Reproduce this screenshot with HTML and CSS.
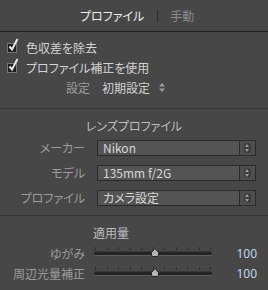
FILE: index.html
```html
<!DOCTYPE html>
<html lang="ja">
<head>
    <meta charset="UTF-8">
    <title>レンズ補正</title>
    <link rel="stylesheet" href="styles.css">
</head>
<body>
    <div class="panel">
        <div class="tabs">
            <span class="tab active">プロファイル</span>
            <span class="tab-sep"></span>
            <span class="tab">手動</span>
        </div>

        <div class="section options">
            <label class="check-row">
                <span class="checkbox">
                    <svg width="12" height="14" viewBox="0 0 12 14"><path d="M2.5 8.5 L5 11.5 L10.5 1" fill="none" stroke="#e6e6e6" stroke-width="2"/></svg>
                </span>
                色収差を除去
            </label>
            <label class="check-row">
                <span class="checkbox">
                    <svg width="12" height="14" viewBox="0 0 12 14"><path d="M2.5 8.5 L5 11.5 L10.5 1" fill="none" stroke="#e6e6e6" stroke-width="2"/></svg>
                </span>
                プロファイル補正を使用
            </label>
            <div class="setup-row">
                <span class="setup-label">設定</span>
                <span class="setup-value">初期設定</span>
                <svg class="mini-arrows" width="6" height="9" viewBox="0 0 6 9"><path d="M0 3.5 L3 0 L6 3.5 Z M0 5.5 L3 9 L6 5.5 Z" fill="#9a9a9a"/></svg>
            </div>
        </div>

        <div class="section lens">
            <div class="section-title">レンズプロファイル</div>
            <div class="form-grid">
                <span class="form-label">メーカー</span>
                <div class="select"><span class="select-text">Nikon</span><span class="select-btn"><i></i></span></div>
                <span class="form-label">モデル</span>
                <div class="select"><span class="select-text">135mm f/2G</span><span class="select-btn"><i></i></span></div>
                <span class="form-label">プロファイル</span>
                <div class="select"><span class="select-text">カメラ設定</span><span class="select-btn"><i></i></span></div>
            </div>
        </div>

        <div class="section amount">
            <div class="section-title amount-title">適用量</div>
            <div class="slider-row">
                <span class="form-label">ゆがみ</span>
                <div class="slider">
                    <div class="ticks"><i></i><i></i><i></i><i></i><i></i><i></i><i></i><i></i><i></i><i></i><i></i></div>
                    <div class="track"></div>
                    <svg class="thumb" width="10" height="9" viewBox="0 0 10 9"><path d="M5 0.5 L8.5 4.5 L8.5 7 Q8.5 8.5 7 8.5 L3 8.5 Q1.5 8.5 1.5 7 L1.5 4.5 Z" fill="#b4b4b4" stroke="#262626" stroke-width="1"/></svg>
                </div>
                <span class="slider-value">100</span>
            </div>
            <div class="slider-row">
                <span class="form-label">周辺光量補正</span>
                <div class="slider">
                    <div class="ticks"><i></i><i></i><i></i><i></i><i></i><i></i><i></i><i></i><i></i><i></i><i></i></div>
                    <div class="track"></div>
                    <svg class="thumb" width="10" height="9" viewBox="0 0 10 9"><path d="M5 0.5 L8.5 4.5 L8.5 7 Q8.5 8.5 7 8.5 L3 8.5 Q1.5 8.5 1.5 7 L1.5 4.5 Z" fill="#b4b4b4" stroke="#262626" stroke-width="1"/></svg>
                </div>
                <span class="slider-value">100</span>
            </div>
        </div>
    </div>
</body>
</html>
```

FILE: styles.css
```css
body {
    margin: 0;
    background: #474747;
    font-family: "Noto Sans CJK JP", "Noto Sans", sans-serif;
    font-size: 12px;
    font-feature-settings: "palt";
    color: #c8c8c8;
}

.panel {
    width: 268px;
    height: 290px;
    overflow: hidden;
}

/* tabs */
.tabs {
    height: 32px;
    display: flex;
    align-items: center;
    padding-left: 80px;
    border-bottom: 1px solid #1e1e1e;
    box-sizing: border-box;
}

.tab {
    color: #8a8a8a;
    font-size: 12px;
    line-height: 1;
}

.tab.active {
    color: #ececec;
}

.tab-sep {
    width: 1px;
    height: 12px;
    background: #2c2c2c;
    margin: 0 12px 0 13px;
}

/* sections */
.section {
    border-bottom: 1px solid #363636;
}

.options {
    padding: 5px 0 10px;
}

.check-row {
    height: 20px;
    display: flex;
    align-items: center;
    padding-left: 7px;
    color: #d4d4d4;
}

.checkbox {
    position: relative;
    width: 8px;
    height: 8px;
    background: #1f1f1f;
    border: 1px solid #777;
    margin-right: 9px;
    margin-top: 2px;
}

.checkbox svg {
    position: absolute;
    left: -1px;
    top: -6px;
}

.setup-row {
    height: 21px;
    display: flex;
    align-items: center;
    padding-left: 66px;
}

.setup-label {
    color: #9c9c9c;
    margin-right: 12px;
}

.setup-value {
    color: #d0d0d0;
    margin-right: 9px;
}

.section-title {
    text-align: center;
    color: #bdbdbd;
    height: 20px;
    line-height: 20px;
}

.lens {
    padding: 7px 0 9px;
}

.form-grid {
    display: grid;
    grid-template-columns: 85px 159px;
    column-gap: 12px;
    row-gap: 8px;
    align-items: center;
    margin-top: 3px;
}

.form-label {
    text-align: right;
    color: #9c9c9c;
}

.select {
    height: 16px;
    display: flex;
    background: #545454;
    border: 1px solid #2a2a2a;
    box-sizing: border-box;
}

.select-text {
    flex: 1;
    padding-left: 5px;
    line-height: 14px;
    color: #d6d6d6;
    font-size: 12px;
}

.select-btn {
    width: 15px;
    border-left: 1px solid #2a2a2a;
    background: #4e4e4e;
    display: flex;
    align-items: center;
    justify-content: center;
}

.select-btn i {
    width: 7px;
    height: 10px;
    border-radius: 4px;
    background: #3c3c3c;
    position: relative;
}

.select-btn i::before,
.select-btn i::after {
    content: "";
    position: absolute;
    left: 1px;
    border-left: 2.5px solid transparent;
    border-right: 2.5px solid transparent;
}

.select-btn i::before {
    top: 1px;
    border-bottom: 3px solid #9a9a9a;
}

.select-btn i::after {
    bottom: 1px;
    border-top: 3px solid #9a9a9a;
}

/* amount sliders */
.amount {
    border-bottom: none;
    padding-top: 7px;
}

.amount-title {
    text-align: left;
    padding-left: 93px;
}

.slider-row {
    display: grid;
    grid-template-columns: 85px 118px 36px;
    column-gap: 9px;
    align-items: center;
    height: 20px;
}

.slider {
    position: relative;
    height: 20px;
}

.ticks {
    position: absolute;
    left: 1px;
    right: 1px;
    top: 4px;
    display: flex;
    justify-content: space-between;
}

.ticks i {
    width: 1px;
    height: 3px;
    background: #2e2e2e;
}

.track {
    position: absolute;
    left: 0;
    right: 0;
    top: 9px;
    height: 3px;
    background: #242424;
    border-radius: 2px;
    box-shadow: 0 1px 0 #5e5e5e, 0 -1px 0 #383838;
}

.thumb {
    position: absolute;
    left: 56px;
    top: 5px;
}

.slider-value {
    text-align: right;
    color: #c2d4ea;
    font-family: "Noto Sans", sans-serif;
    font-size: 12px;
}
```
